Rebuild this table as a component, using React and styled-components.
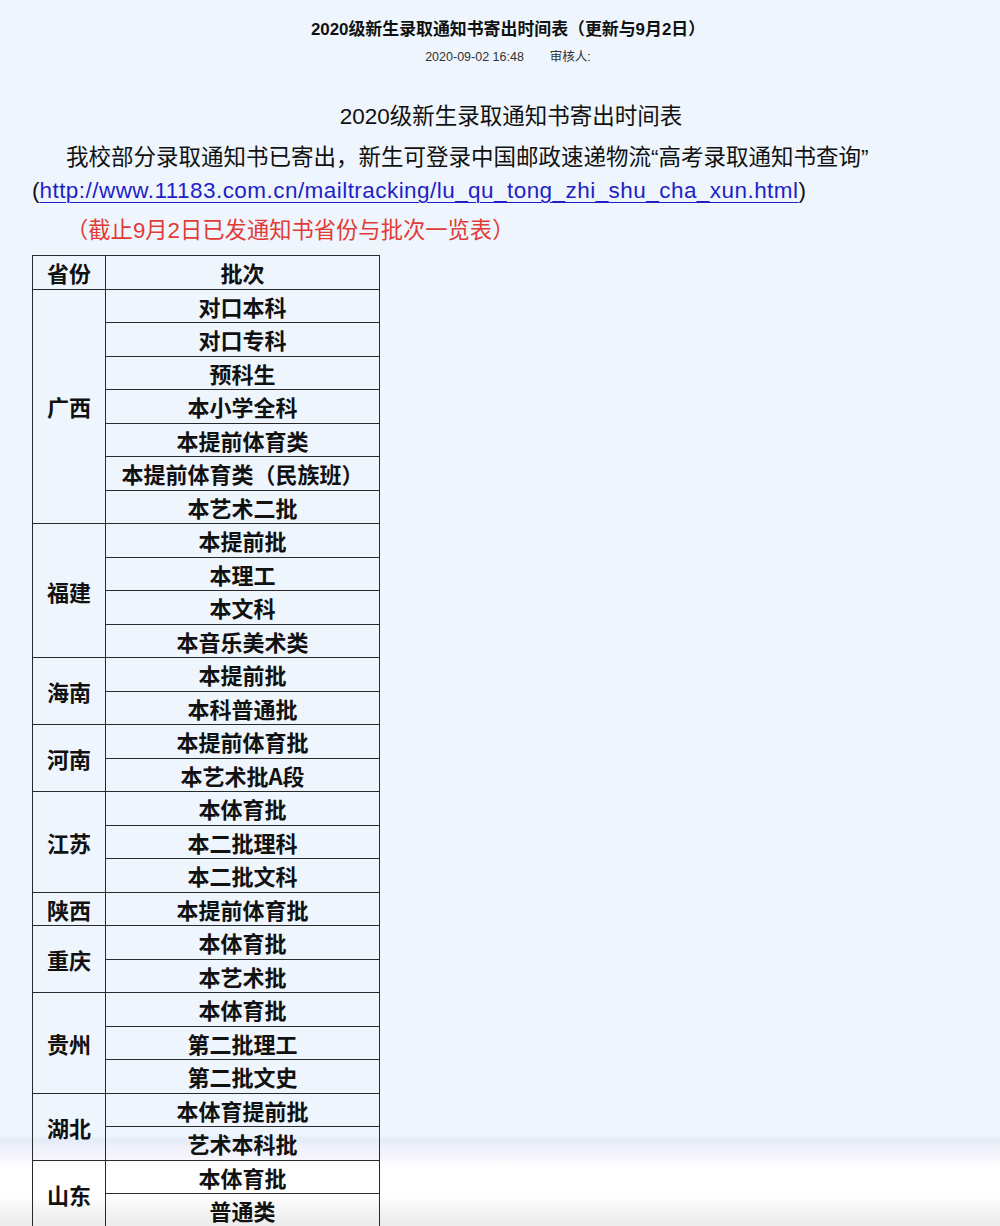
import React from 'react';
import styled, { createGlobalStyle } from 'styled-components';

const GlobalStyle = createGlobalStyle`
  html, body {
    margin: 0;
    padding: 0;
  }
  body {
    min-height: 1226px;
    font-family: "Liberation Sans", "Noto Sans CJK SC", sans-serif;
    color: #111111;
    background: linear-gradient(
      to bottom,
      #eef5fc 0px,
      #eef5fc 1136px,
      #e5edf8 1138px,
      #e8edf8 1144px,
      #f1f1fb 1146px,
      #f4f4fc 1158px,
      #fafafe 1161px,
      #ffffff 1168px,
      #ffffff 1198px,
      #f9f9f9 1202px,
      #f3f3f3 1212px,
      #ececec 1226px
    );
  }
`;

const Page = styled.div`
  width: 1000px;
  padding-top: 18px;
`;

const Header = styled.div`
  margin-left: 16px;
  text-align: center;
`;

const Title = styled.h1`
  margin: 0;
  font-size: 16.9px;
  line-height: 24px;
  font-weight: 700;
  color: #111111;
`;

const Meta = styled.div`
  margin-top: 5px;
  font-size: 12.5px;
  line-height: 20px;
  color: #333333;
`;

const Reviewer = styled.span`
  margin-left: 26px;
`;

const Content = styled.div`
  padding: 0 10px 0 32px;
  margin-top: 35px;
`;

const Heading = styled.h2`
  margin: 0;
  text-align: center;
  font-size: 22.5px;
  line-height: 30px;
  font-weight: 400;
  color: #111111;
`;

const Paragraph = styled.p`
  margin: 8.5px 0 0;
  font-size: 22.5px;
  line-height: 33px;
  text-indent: 34px;
  color: #111111;
`;

const Link = styled.a`
  color: #1f1fc8;
  letter-spacing: 0.45px;
  text-decoration: underline;
  text-underline-offset: 4px;
  text-decoration-thickness: 1px;
`;

const Notice = styled.p`
  margin: 7px 0 0;
  padding-left: 34px;
  font-size: 22.3px;
  line-height: 33px;
  color: #e23b36;
`;

const Table = styled.table`
  margin-top: 8.5px;
  border-collapse: collapse;
  width: 347px;
  table-layout: fixed;
  background: transparent;
`;

const Cell = styled.td`
  border: 1px solid #2a2a2a;
  padding: 0;
  height: 32.5px;
  text-align: center;
  vertical-align: middle;
  font-family: "Noto Sans CJK SC", "Liberation Sans", sans-serif;
  font-size: 22px;
  font-weight: 700;
  line-height: 30px;
  color: #111111;
  white-space: nowrap;
`;

const groups = [
  { province: '广西', batches: ['对口本科', '对口专科', '预科生', '本小学全科', '本提前体育类', '本提前体育类（民族班）', '本艺术二批'] },
  { province: '福建', batches: ['本提前批', '本理工', '本文科', '本音乐美术类'] },
  { province: '海南', batches: ['本提前批', '本科普通批'] },
  { province: '河南', batches: ['本提前体育批', '本艺术批A段'] },
  { province: '江苏', batches: ['本体育批', '本二批理科', '本二批文科'] },
  { province: '陕西', batches: ['本提前体育批'] },
  { province: '重庆', batches: ['本体育批', '本艺术批'] },
  { province: '贵州', batches: ['本体育批', '第二批理工', '第二批文史'] },
  { province: '湖北', batches: ['本体育提前批', '艺术本科批'] },
  { province: '山东', batches: ['本体育批', '普通类'] },
];

const url = 'http://www.11183.com.cn/mailtracking/lu_qu_tong_zhi_shu_cha_xun.html';

export default function App() {
  return (
    <>
      <GlobalStyle />
      <Page>
        <Header>
          <Title>2020级新生录取通知书寄出时间表（更新与9月2日）</Title>
          <Meta>
            2020-09-02 16:48<Reviewer>审核人:</Reviewer>
          </Meta>
        </Header>
        <Content>
          <Heading>2020级新生录取通知书寄出时间表</Heading>
          <Paragraph>
            我校部分录取通知书已寄出，新生可登录中国邮政速递物流“高考录取通知书查询”
            <br />
            (<Link href={url}>{url}</Link>)
          </Paragraph>
          <Notice>（截止9月2日已发通知书省份与批次一览表）</Notice>
          <Table>
            <colgroup>
              <col style={{ width: 73 }} />
              <col style={{ width: 274 }} />
            </colgroup>
            <tbody>
              <tr>
                <Cell>省份</Cell>
                <Cell>批次</Cell>
              </tr>
              {groups.map(g =>
                g.batches.map((b, i) => (
                  <tr key={g.province + b}>
                    {i === 0 && <Cell rowSpan={g.batches.length}>{g.province}</Cell>}
                    <Cell>{b}</Cell>
                  </tr>
                ))
              )}
            </tbody>
          </Table>
        </Content>
      </Page>
    </>
  );
}
